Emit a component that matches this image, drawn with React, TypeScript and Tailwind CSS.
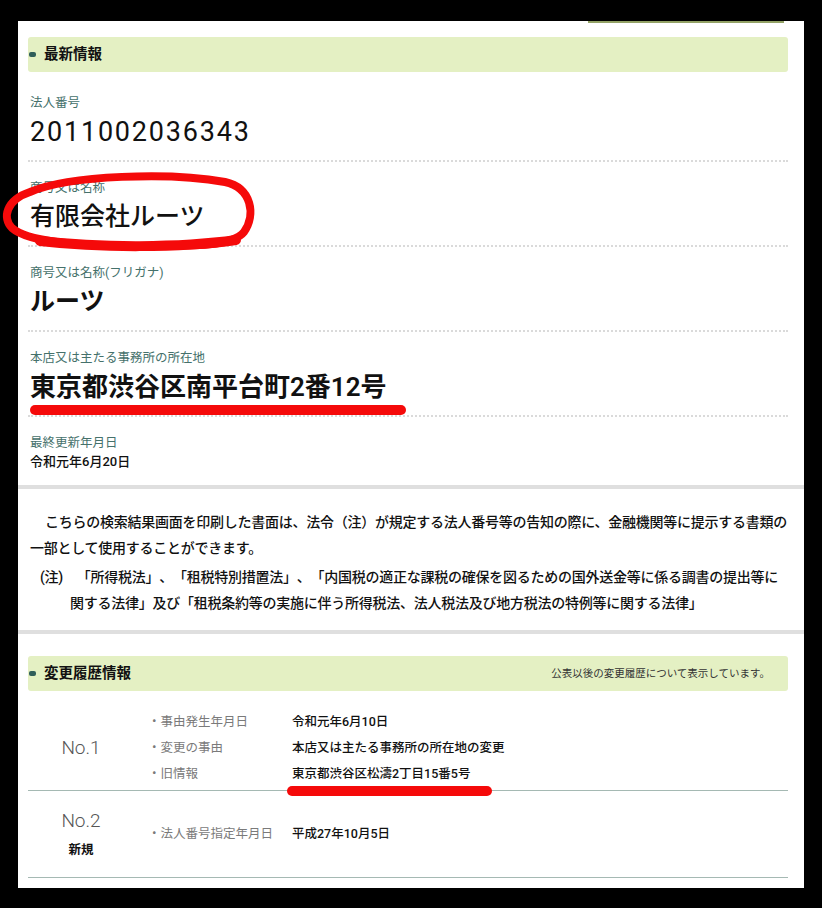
import React from 'react';

type Field = { label: string; value: string; valueClass: string };

const fields: Field[] = [
  { label: '法人番号', value: '2011002036343', valueClass: 'text-[27px] tracking-[1.8px] font-normal' },
  { label: '商号又は名称', value: '有限会社ルーツ', valueClass: 'text-[25px] font-medium' },
  { label: '商号又は名称(フリガナ)', value: 'ルーツ', valueClass: 'text-[25px] font-semibold' },
  { label: '本店又は主たる事務所の所在地', value: '東京都渋谷区南平台町2番12号', valueClass: 'text-[26px] font-semibold' },
];

function SectionHeader({ title, note }: { title: string; note?: string }) {
  return (
    <div className="flex h-[35px] items-center justify-between rounded-[3px] bg-[#e4f0c3] pl-[1px] pr-[18px]">
      <div className="flex items-center gap-[8px]">
        <span className="h-[5px] w-[7px] rounded-[2px] bg-[#2f5e59]" />
        <span className="text-[14.5px] font-bold text-[#111]">{title}</span>
      </div>
      {note && <span className="text-[10.5px] text-[#333]">{note}</span>}
    </div>
  );
}

function HistoryRow({ label, value }: { label: string; value: string }) {
  return (
    <div className="flex h-[26px] items-center text-[12.5px]">
      <div className="w-[144px] text-[#7a7a7a]">・{label}</div>
      <div className="font-medium text-[#111]">{value}</div>
    </div>
  );
}

export default function App() {
  return (
    <div className="relative h-[908px] w-[822px] overflow-hidden bg-black font-['Roboto','Noto_Sans_CJK_JP',sans-serif] text-[#111]">
      <div className="ml-[18px] mt-[21px] h-[867px] w-[786px] bg-white">
        {/* cut-off button at the very top */}
        <div className="flex justify-end pr-[20px]">
          <div className="h-[2px] w-[196px] bg-[#93a266]" />
        </div>

        {/* 最新情報 */}
        <div className="pl-[10px] pr-[16px]">
          <div className="mt-[14px]">
            <SectionHeader title="最新情報" />
          </div>
          <div className="mt-[5px]">
            {fields.map((f) => (
              <div key={f.label} className="border-b-2 border-dotted border-[#dadada] pb-[9px] pt-[18px]">
                <div className="pl-[2px] text-[12.5px] leading-4 text-[#45716b]">{f.label}</div>
                <div className={`mt-[2px] pl-[2px] leading-[38px] ${f.valueClass}`}>{f.value}</div>
              </div>
            ))}
            <div className="pb-[13px] pt-[18px]">
              <div className="pl-[2px] text-[12.5px] leading-4 text-[#45716b]">最終更新年月日</div>
              <div className="mt-[1px] pl-[2px] text-[13px] font-medium leading-5">令和元年6月20日</div>
            </div>
          </div>
        </div>

        <div className="h-[4px] bg-[#dfdfdf]" />

        {/* notice */}
        <div className="pb-[14px] pl-[12px] pr-[12px] pt-[20px] text-[14px] font-medium tracking-[-0.25px] text-[#111] [text-spacing-trim:space-all]">
          <p className="indent-[15px] leading-[26px]">
            こちらの検索結果画面を印刷した書面は、法令（注）が規定する法人番号等の告知の際に、金融機関等に提示する書類の
            <br />
            一部として使用することができます。
          </p>
          <p className="mt-[3px] pl-[40px] -indent-[30px] leading-[26px]">
            (注)　「所得税法」、「租税特別措置法」、「内国税の適正な課税の確保を図るための国外送金等に係る調書の提出等に
            <br />
            関する法律」及び「租税条約等の実施に伴う所得税法、法人税法及び地方税法の特例等に関する法律」
          </p>
        </div>

        <div className="h-[4px] bg-[#dfdfdf]" />

        {/* 変更履歴情報 */}
        <div className="pl-[10px] pr-[16px]">
          <div className="mt-[22px]">
            <SectionHeader title="変更履歴情報" note="公表以後の変更履歴について表示しています。" />
          </div>

          <div className="flex items-center gap-[14px] border-b border-[#a5b9b3] pb-[3px] pt-[18px]">
            <div className="w-[106px] text-center text-[19px] font-light text-[#555]">No.1</div>
            <div>
              <HistoryRow label="事由発生年月日" value="令和元年6月10日" />
              <HistoryRow label="変更の事由" value="本店又は主たる事務所の所在地の変更" />
              <HistoryRow label="旧情報" value="東京都渋谷区松濤2丁目15番5号" />
            </div>
          </div>

          <div className="flex h-[87px] items-center gap-[14px] border-b border-[#a5b9b3]">
            <div className="flex w-[106px] flex-col items-center">
              <div className="text-[19px] font-light leading-[24px] text-[#555]">No.2</div>
              <div className="mt-[8px] text-[12.5px] font-bold leading-[18px]">新規</div>
            </div>
            <div>
              <HistoryRow label="法人番号指定年月日" value="平成27年10月5日" />
            </div>
          </div>
        </div>
      </div>

      {/* hand-drawn red marks lying over the page */}
      <svg className="pointer-events-none absolute left-0 top-0" width="822" height="908" viewBox="0 0 822 908" fill="none">
        <path
          d="M30 192 C70 175 170 172 225 182 C252 188 256 215 244 232 C232 247 190 246 140 246 C90 246 30 244 12 228 C2 218 6 200 30 192 Z"
          stroke="#f50a0a"
          strokeWidth="8"
          strokeLinecap="round"
          strokeLinejoin="round"
        />
        <path d="M40 241 C100 248 180 248 236 240" stroke="#f50a0a" strokeWidth="10" strokeLinecap="round" />
        <path d="M35 410 L401 410" stroke="#f50a0a" strokeWidth="10" strokeLinecap="round" />
        <path d="M292 791 L487 791" stroke="#f50a0a" strokeWidth="10" strokeLinecap="round" />
      </svg>
    </div>
  );
}
